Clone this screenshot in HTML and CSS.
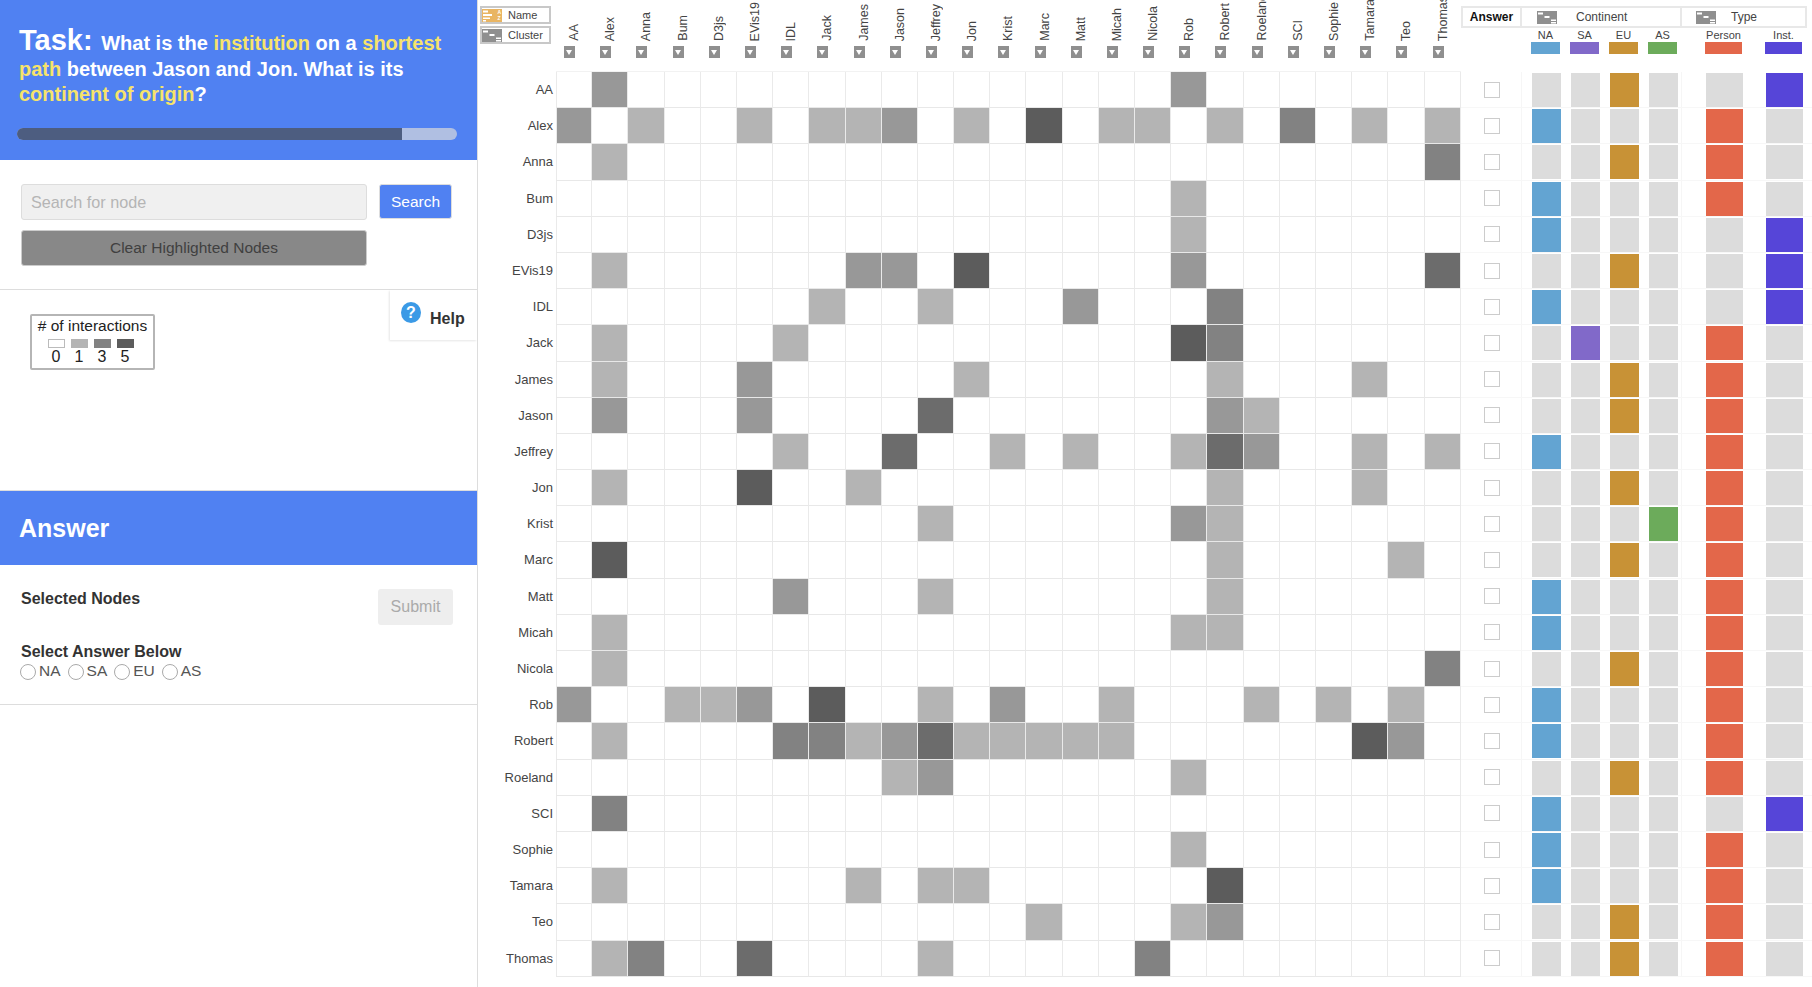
FILE: index.html
```html
<!DOCTYPE html>
<html lang="en">
<head>
    <meta charset="UTF-8">
    <title>Adjacency Matrix Study</title>
    <link rel="stylesheet" href="styles.css">
</head>
<body>
    <svg class="icon-defs" width="0" height="0">
        <symbol id="cluster-icon" viewBox="0 0 20 13">
            <rect width="20" height="13" fill="#8f8f8f"/>
            <rect x="1" y="1.5" width="5" height="2" fill="#fff"/>
            <rect x="7.5" y="5" width="5" height="2" fill="#fff"/>
            <rect x="14" y="8.5" width="5" height="1.5" fill="#fff"/>
            <rect x="14" y="11" width="5" height="1.5" fill="#fff"/>
        </symbol>
    </svg>

    <!-- Task panel -->
    <aside class="sidebar">
        <div class="task-header">
            <p class="task-text">
                <span class="task-label">Task:</span>
                What is the <em>institution</em> on a <em>shortest path</em> between Jason and Jon. What is its <em>continent of origin</em>?
            </p>
            <div class="progress"><div class="progress-fill"></div></div>
        </div>

        <div class="search-panel">
            <div class="search-row">
                <input class="search-input" type="text" placeholder="Search for node">
                <button class="search-button">Search</button>
            </div>
            <button class="clear-button">Clear Highlighted Nodes</button>
        </div>

        <div class="legend-panel">
            <div class="legend">
                <div class="legend-title"># of interactions</div>
                <div class="legend-scale">
                    <div class="legend-item"><span class="legend-swatch empty"></span>0</div>
                    <div class="legend-item"><span class="legend-swatch l1"></span>1</div>
                    <div class="legend-item"><span class="legend-swatch l3"></span>3</div>
                    <div class="legend-item"><span class="legend-swatch l5"></span>5</div>
                </div>
            </div>
            <div class="help"><span class="help-icon">?</span><span class="help-text">Help</span></div>
        </div>

        <h2 class="answer-header">Answer</h2>

        <div class="answer-panel">
            <div class="answer-top">
                <strong class="answer-label">Selected Nodes</strong>
                <button class="submit-button" disabled>Submit</button>
            </div>
            <strong class="answer-label">Select Answer Below</strong>
            <div class="radio-row">
                <label class="radio-label"><input type="radio" name="continent">NA</label>
                <label class="radio-label"><input type="radio" name="continent">SA</label>
                <label class="radio-label"><input type="radio" name="continent">EU</label>
                <label class="radio-label"><input type="radio" name="continent">AS</label>
            </div>
        </div>
    </aside>

    <!-- Matrix -->
    <main class="matrix-panel">
        <div class="matrix-head">
            <div class="sort-buttons">
                <div class="sort-button">
                    <span class="name-icon">
                        <svg width="14" height="13" viewBox="0 0 14 13">
                            <rect x="1" y="1.5" width="5" height="2" fill="#fff"/>
                            <rect x="1" y="5" width="9" height="2" fill="#fff"/>
                            <rect x="1" y="8.5" width="7" height="1.5" fill="#fff"/>
                            <rect x="1" y="11" width="3" height="1.5" fill="#fff"/>
                        </svg>
                        <span class="az">A<br>Z</span>
                    </span>
                    Name
                </div>
                <div class="sort-button">
                    <svg class="cluster-icon" width="20" height="13"><use href="#cluster-icon"/></svg>
                    Cluster
                </div>
            </div>
            <div class="col-heads" id="colHeads"></div>
        </div>
        <div class="matrix-body">
            <div class="row-labels" id="rowLabels"></div>
            <div class="matrix-grid" id="matrixGrid"></div>
        </div>
    </main>

    <!-- Node attributes -->
    <section class="attr-panel">
        <div class="attr-tabs">
            <div class="attr-tab answer-tab">Answer</div>
            <div class="attr-tab continent-tab"><svg class="tab-icon" width="20" height="13"><use href="#cluster-icon"/></svg><span>Continent</span></div>
            <div class="attr-tab type-tab"><svg class="tab-icon" width="20" height="13"><use href="#cluster-icon"/></svg><span>Type</span></div>
        </div>
        <div class="attr-keys">
            <div class="key-group continent-group">
                <div class="key"><span>NA</span><i class="na"></i></div>
                <div class="key"><span>SA</span><i class="sa"></i></div>
                <div class="key"><span>EU</span><i class="eu"></i></div>
                <div class="key"><span>AS</span><i class="as"></i></div>
            </div>
            <div class="key-group type-group">
                <div class="key"><span>Person</span><i class="person"></i></div>
                <div class="key"><span>Inst.</span><i class="inst"></i></div>
            </div>
        </div>
        <div class="attr-rows" id="attrRows"></div>
    </section>

    <script src="script.js"></script>
</body>
</html>
```

FILE: styles.css
```css
* {
    box-sizing: border-box;
}
body, html {
    margin: 0;
    padding: 0;
    height: 100%;
    overflow: hidden;
    background-color: #fff;
    font-family: "Liberation Sans", Arial, sans-serif;
    color: #333;
}
body {
    display: flex;
}
.icon-defs {
    position: absolute;
}

/* Sidebar */
.sidebar {
    width: 478px;
    flex: none;
    border-right: 1px solid #ddd;
}
.task-header {
    height: 160px;
    background-color: #5081f2;
    padding: 28px 17px 0 19px;
    color: #fff;
}
.task-text {
    margin: 0;
    height: 100px;
    font-size: 20px;
    line-height: 25.5px;
    font-weight: bold;
}
.task-text em {
    font-style: normal;
    color: #f6e36b;
}
.task-label {
    font-size: 29px;
    line-height: 25.5px;
    margin-right: 3px;
}
.progress {
    width: 440px;
    height: 12px;
    margin-left: -2px;
    background-color: #b0bfe2;
    border-radius: 6px;
    overflow: hidden;
}
.progress-fill {
    width: 385px;
    height: 100%;
    background-color: #4d5d80;
}

.search-panel {
    height: 130px;
    padding: 24px 25px 0 21px;
    border-bottom: 1px solid #ddd;
}
.search-row {
    display: flex;
    gap: 12px;
    margin-bottom: 10px;
}
.search-input {
    width: 346px;
    height: 36px;
    padding: 0 9px;
    font-family: inherit;
    font-size: 16.2px;
    background-color: #f0f0f0;
    border: 1px solid #ddd;
    border-radius: 3px;
}
.search-input::placeholder {
    color: #b5b5b5;
}
.search-button {
    width: 73px;
    height: 35px;
    font-family: inherit;
    font-size: 15.5px;
    color: #fff;
    background-color: #5081f2;
    border: 1px solid #ddd;
    border-radius: 3px;
}
.clear-button {
    display: block;
    width: 346px;
    height: 36px;
    font-family: inherit;
    font-size: 15.5px;
    color: #404040;
    background-color: #888;
    border: 1px solid #ccc;
    border-radius: 3px;
}

.legend-panel {
    display: flex;
    justify-content: space-between;
    align-items: flex-start;
    height: 201px;
    border-bottom: 1px solid #ddd;
}
.legend {
    width: 125px;
    height: 56px;
    margin: 24px 0 0 30px;
    border: 2px solid #b5b5b5;
    border-radius: 2px;
    text-align: center;
    color: #222;
}
.legend-title {
    font-size: 15.5px;
    line-height: 20px;
    margin-top: 0;
}
.legend-scale {
    display: flex;
    justify-content: center;
    gap: 6px;
    margin-top: 3px;
    padding-right: 4px;
}
.legend-item {
    width: 17px;
    font-size: 16px;
    line-height: 18px;
}
.legend-swatch {
    display: block;
    height: 9px;
}
.legend-swatch.empty {
    background-color: #fff;
    border: 1px solid #bbb;
}
.help {
    display: flex;
    align-items: center;
    gap: 9px;
    width: 87px;
    height: 50px;
    padding: 0 0 0 11px;
    font-size: 16px;
    font-weight: bold;
    box-shadow: -1px 1px 2px rgba(0, 0, 0, 0.1);
}
.help-icon {
    display: block;
    width: 20px;
    height: 21px;
    margin-top: -5px;
    border-radius: 50%;
    background-color: #3b9ae6;
    color: #fff;
    font-size: 16px;
    line-height: 21px;
    text-align: center;
}
.help-text {
    margin-top: 8px;
}

.answer-header {
    height: 74px;
    margin: 0;
    padding: 0 19px;
    background-color: #5081f2;
    color: #fff;
    font-size: 25px;
    line-height: 74px;
}
.answer-panel {
    height: 140px;
    padding: 24px 24px 0 21px;
    border-bottom: 1px solid #ddd;
}
.answer-top {
    display: flex;
    justify-content: space-between;
    align-items: flex-start;
    height: 53px;
}
.answer-label {
    display: block;
    font-size: 16px;
    line-height: 20px;
}
.submit-button {
    width: 75px;
    height: 36px;
    font-family: inherit;
    font-size: 16px;
    color: #aaa;
    background-color: #eee;
    border: none;
    border-radius: 3px;
}
.radio-row {
    display: flex;
    gap: 7px;
    margin-left: -1px;
}
.radio-label {
    display: flex;
    align-items: flex-start;
    gap: 3px;
    font-size: 15.5px;
    line-height: 18px;
    color: #555;
}
.radio-label input {
    appearance: none;
    width: 16px;
    height: 16px;
    margin: 2px 0 0;
    border: 1px solid #aaa;
    border-radius: 50%;
}

/* Matrix */
.matrix-panel {
    width: 983px;
    flex: none;
}
.matrix-head {
    display: flex;
    height: 72px;
}
.sort-buttons {
    width: 78px;
    flex: none;
    padding: 6px 0 0 2px;
}
.sort-button {
    display: flex;
    align-items: center;
    gap: 6px;
    width: 71px;
    height: 18px;
    margin-bottom: 2px;
    border: 2px solid #c8c8c8;
    font-size: 11px;
    color: #444;
}
.name-icon {
    display: flex;
    justify-content: space-between;
    width: 20px;
    height: 13px;
    background-color: #e9b563;
}
.az {
    font-size: 5px;
    line-height: 6px;
    font-weight: bold;
    color: #fff;
    padding-right: 1px;
}
.col-heads {
    display: grid;
    grid-template-columns: repeat(25, 36.2px);
}
.col-head {
    display: flex;
    flex-direction: column;
    align-items: center;
    justify-content: flex-end;
    height: 58px;
}
.col-name {
    writing-mode: vertical-rl;
    transform: rotate(180deg);
    font-size: 12.5px;
    line-height: 16px;
    color: #444;
    white-space: nowrap;
    margin-bottom: 5px;
}
.col-sort {
    width: 11px;
    height: 12px;
    margin-right: 9px;
    flex: none;
    background-color: #8f8f8f;
    position: relative;
}
.col-sort::after {
    content: "";
    position: absolute;
    left: 2px;
    top: 4px;
    border-left: 3.5px solid transparent;
    border-right: 3.5px solid transparent;
    border-top: 5px solid #fff;
}
.matrix-body {
    display: flex;
}
.row-labels {
    width: 78px;
    flex: none;
    display: grid;
    grid-auto-rows: 36.2px;
}
.row-label {
    padding-right: 3px;
    text-align: right;
    font-size: 13px;
    line-height: 36px;
    color: #444;
}
.matrix-grid {
    display: grid;
    grid-template-columns: repeat(25, 36.2px);
    grid-auto-rows: 36.2px;
    box-shadow: 0 -1px #f2f2f2;
    height: 905px;
}
.cell {
    border-right: 1px solid #eaeaea;
    border-bottom: 1px solid #e8e8e8;
}
.cell.first-col {
    box-shadow: inset 1px 0 #eaeaea;
}
.l1 { background-color: #b4b4b4; }
.l2 { background-color: #989898; }
.l3 { background-color: #828282; }
.l4 { background-color: #6c6c6c; }
.l5 { background-color: #5c5c5c; }

/* Attribute columns */
.attr-panel {
    width: 351px;
    flex: none;
}
.attr-tabs {
    display: flex;
    width: 346px;
    height: 22px;
    margin-top: 6px;
    border: 2px solid #e8e8e8;
    font-size: 12px;
    color: #444;
}
.attr-tab {
    display: flex;
    align-items: center;
    border-right: 2px solid #e8e8e8;
}
.attr-tab:last-child {
    border-right: none;
}
.answer-tab {
    width: 59px;
    justify-content: center;
    font-weight: bold;
    color: #111;
}
.continent-tab {
    width: 160px;
    padding-left: 15px;
}
.type-tab {
    flex: 1;
    padding-left: 14px;
}
.tab-icon {
    margin-right: 19px;
}
.type-tab span {
    margin-left: -4px;
}
.attr-keys {
    display: flex;
    height: 44px;
    padding-left: 70px;
}
.key-group {
    display: flex;
}
.continent-group {
    gap: 10px;
    width: 174px;
}
.type-group {
    gap: 23px;
}
.key {
    display: flex;
    flex-direction: column;
    align-items: center;
    font-size: 11px;
    line-height: 14px;
    color: #444;
}
.key i {
    display: block;
    height: 12px;
}
.continent-group .key i {
    width: 29px;
}
.type-group .key i {
    width: 37px;
}
.na { background-color: #63a4d2; }
.sa { background-color: #8169c9; }
.eu { background-color: #c89236; }
.as { background-color: #6cab5b; }
.person { background-color: #e3674a; }
.inst { background-color: #5645d8; }
.off { background-color: #dcdcdc; }

.attr-rows {
    display: grid;
    grid-auto-rows: 36.2px;
}
.attr-row {
    display: flex;
    border-bottom: 1px solid #f7f7f7;
}
.answer-cell {
    display: flex;
    width: 60px;
    align-items: center;
    justify-content: center;
    border-right: 1px solid #f6f6f6;
    margin-left: 1px;
}
.answer-cell input {
    appearance: none;
    width: 16px;
    height: 16px;
    margin: 0;
    border: 1px solid #ccc;
    background-color: #fff;
}
.attr-cells {
    display: flex;
    padding-top: 1px;
}
.attr-cell {
    height: 34px;
}
.continent-cells {
    width: 160px;
    padding-left: 10px;
    gap: 10px;
    border-right: 1px solid #f6f6f6;
}
.continent-cells .attr-cell {
    width: 29px;
}
.type-cells {
    padding-left: 24px;
    gap: 23px;
}
.type-cells .attr-cell {
    width: 37px;
}
```

FILE: script.js
```js
const names = ['AA', 'Alex', 'Anna', 'Bum', 'D3js', 'EVis19', 'IDL', 'Jack', 'James', 'Jason', 'Jeffrey', 'Jon', 'Krist',
    'Marc', 'Matt', 'Micah', 'Nicola', 'Rob', 'Robert', 'Roeland', 'SCI', 'Sophie', 'Tamara', 'Teo', 'Thomas'];

// name -> [neighbour, shade]
const edges = {
    AA: [['Alex', 2], ['Rob', 2]],
    Alex: [['AA', 2], ['Anna', 1], ['EVis19', 1], ['Jack', 1], ['James', 1], ['Jason', 2], ['Jon', 1], ['Marc', 5], ['Micah', 1],
        ['Nicola', 1], ['Robert', 1], ['SCI', 3], ['Tamara', 1], ['Thomas', 1]],
    Anna: [['Alex', 1], ['Thomas', 3]],
    Bum: [['Rob', 1]],
    D3js: [['Rob', 1]],
    EVis19: [['Alex', 1], ['James', 2], ['Jason', 2], ['Jon', 5], ['Rob', 2], ['Thomas', 4]],
    IDL: [['Jack', 1], ['Jeffrey', 1], ['Matt', 2], ['Robert', 3]],
    Jack: [['Alex', 1], ['IDL', 1], ['Rob', 5], ['Robert', 3]],
    James: [['Alex', 1], ['EVis19', 2], ['Jon', 1], ['Robert', 1], ['Tamara', 1]],
    Jason: [['Alex', 2], ['EVis19', 2], ['Jeffrey', 4], ['Robert', 2], ['Roeland', 1]],
    Jeffrey: [['IDL', 1], ['Jason', 4], ['Krist', 1], ['Matt', 1], ['Rob', 1], ['Robert', 4], ['Roeland', 2], ['Tamara', 1], ['Thomas', 1]],
    Jon: [['Alex', 1], ['EVis19', 5], ['James', 1], ['Robert', 1], ['Tamara', 1]],
    Krist: [['Jeffrey', 1], ['Rob', 2], ['Robert', 1]],
    Marc: [['Alex', 5], ['Robert', 1], ['Teo', 1]],
    Matt: [['IDL', 2], ['Jeffrey', 1], ['Robert', 1]],
    Micah: [['Alex', 1], ['Rob', 1], ['Robert', 1]],
    Nicola: [['Alex', 1], ['Thomas', 3]],
    Rob: [['AA', 2], ['Bum', 1], ['D3js', 1], ['EVis19', 2], ['Jack', 5], ['Jeffrey', 1], ['Krist', 2], ['Micah', 1], ['Roeland', 1],
        ['Sophie', 1], ['Teo', 1]],
    Robert: [['Alex', 1], ['IDL', 3], ['Jack', 3], ['James', 1], ['Jason', 2], ['Jeffrey', 4], ['Jon', 1], ['Krist', 1], ['Marc', 1],
        ['Matt', 1], ['Micah', 1], ['Tamara', 5], ['Teo', 2]],
    Roeland: [['Jason', 1], ['Jeffrey', 2], ['Rob', 1]],
    SCI: [['Alex', 3]],
    Sophie: [['Rob', 1]],
    Tamara: [['Alex', 1], ['James', 1], ['Jeffrey', 1], ['Jon', 1], ['Robert', 5]],
    Teo: [['Marc', 1], ['Rob', 1], ['Robert', 2]],
    Thomas: [['Alex', 1], ['Anna', 3], ['EVis19', 4], ['Jeffrey', 1], ['Nicola', 3]]
};

const continents = ['na', 'sa', 'eu', 'as'];
const nodeContinent = { AA: 'eu', Alex: 'na', Anna: 'eu', Bum: 'na', D3js: 'na', EVis19: 'eu', IDL: 'na', Jack: 'sa', James: 'eu',
    Jason: 'eu', Jeffrey: 'na', Jon: 'eu', Krist: 'as', Marc: 'eu', Matt: 'na', Micah: 'na', Nicola: 'eu', Rob: 'na', Robert: 'na',
    Roeland: 'eu', SCI: 'na', Sophie: 'na', Tamara: 'na', Teo: 'eu', Thomas: 'eu' };
const institutions = ['AA', 'D3js', 'EVis19', 'IDL', 'SCI'];

function el(className, text) {
    const div = document.createElement('div');
    div.className = className;
    if (text) div.textContent = text;
    return div;
}

const colHeads = document.getElementById('colHeads');
const rowLabels = document.getElementById('rowLabels');
const matrixGrid = document.getElementById('matrixGrid');
const attrRows = document.getElementById('attrRows');

names.forEach(name => {
    const head = el('col-head');
    head.appendChild(el('col-name', name));
    head.appendChild(el('col-sort'));
    colHeads.appendChild(head);

    rowLabels.appendChild(el('row-label', name));

    const shades = new Map(edges[name]);
    names.forEach((other, i) => {
        let cls = 'cell';
        if (i === 0) cls += ' first-col';
        if (shades.has(other)) cls += ' l' + shades.get(other);
        matrixGrid.appendChild(el(cls));
    });

    const row = el('attr-row');
    const answer = el('answer-cell');
    const box = document.createElement('input');
    box.type = 'checkbox';
    answer.appendChild(box);
    row.appendChild(answer);

    const contCells = el('attr-cells continent-cells');
    continents.forEach(c => {
        contCells.appendChild(el('attr-cell ' + (nodeContinent[name] === c ? c : 'off')));
    });
    row.appendChild(contCells);

    const isInst = institutions.includes(name);
    const typeCells = el('attr-cells type-cells');
    typeCells.appendChild(el('attr-cell ' + (isInst ? 'off' : 'person')));
    typeCells.appendChild(el('attr-cell ' + (isInst ? 'inst' : 'off')));
    row.appendChild(typeCells);

    attrRows.appendChild(row);
});
```
